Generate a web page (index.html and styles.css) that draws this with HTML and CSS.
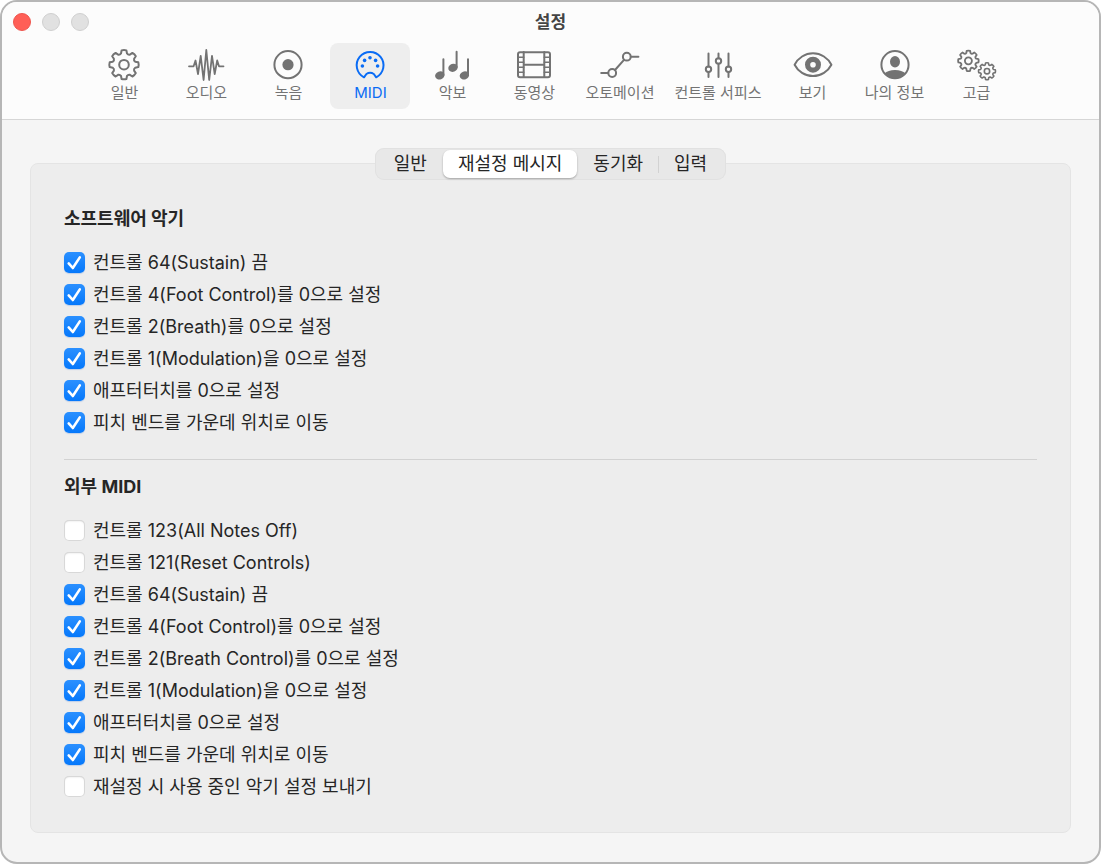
FILE: index.html
```html
<!DOCTYPE html>
<html lang="ko">
<head>
  <meta charset="UTF-8">
  <meta name="viewport" content="width=device-width, initial-scale=1.0">
  <title>설정</title>
  <link rel="stylesheet" href="styles.css">
</head>
<body>
  <div class="window">
    <header class="header">
      <div class="titlebar">
        <div class="lights">
          <button class="light close" aria-label="닫기"></button>
          <button class="light" aria-label="최소화" disabled></button>
          <button class="light" aria-label="확대" disabled></button>
        </div>
        <h1>설정</h1>
      </div>

      <nav class="toolbar">
        <button class="tool">
          <svg class="icon" viewBox="0 0 40 34">
            <defs>
              <path id="gear" d="M-2.4-14.3Q0-15 2.4-14.3L3-11.2Q4.2-9.6 5.9-10.1L8.4-11.8Q10.6-10.6 11.8-8.4L10.1-5.9Q9.6-4.2 11.2-3L14.3-2.4Q15 0 14.3 2.4L11.2 3Q9.6 4.2 10.1 5.9L11.8 8.4Q10.6 10.6 8.4 11.8L5.9 10.1Q4.2 9.6 3 11.2L2.4 14.3Q0 15-2.4 14.3L-3 11.2Q-4.2 9.6-5.9 10.1L-8.4 11.8Q-10.6 10.6-11.8 8.4L-10.1 5.9Q-9.6 4.2-11.2 3L-14.3 2.4Q-15 0-14.3-2.4L-11.2-3Q-9.6-4.2-10.1-5.9L-11.8-8.4Q-10.6-10.6-8.4-11.8L-5.9-10.1Q-4.2-9.6-3-11.2Z"/>
            </defs>
            <g transform="translate(20 17.7)"><use href="#gear"/><circle r="4.8"/></g>
          </svg>
          <span>일반</span>
        </button>
        <button class="tool">
          <svg class="icon" viewBox="0 0 40 34">
            <path stroke-width="1.8" d="M3 19.3H7.6L9.5 13.5L12 27L14.7 8.8L17.6 33L20.3 3L23.2 33L26 8.8L28.7 27L31.2 13.5L33 19.3H37.5"/>
          </svg>
          <span>오디오</span>
        </button>
        <button class="tool">
          <svg class="icon" viewBox="0 0 40 34">
            <circle cx="20" cy="17.7" r="13.6"/><circle class="fill" cx="20" cy="17.7" r="5.6"/>
          </svg>
          <span>녹음</span>
        </button>
        <button class="tool active" aria-current="page">
          <svg class="icon" viewBox="0 0 40 34">
            <path d="M14 30.3A13.4 13.4 0 1 1 26.2 30.3L23.8 27Q20.1 24.6 16.4 27Z"/>
            <g class="fill">
              <circle cx="12.4" cy="19" r="1.8"/><circle cx="14.6" cy="13.4" r="1.8"/><circle cx="20" cy="10.8" r="1.8"/><circle cx="25.6" cy="13.4" r="1.8"/><circle cx="27.6" cy="19" r="1.8"/>
            </g>
          </svg>
          <span>MIDI</span>
        </button>
        <button class="tool">
          <svg class="icon" viewBox="0 0 40 34">
            <path d="M11.4 28V12.2M24.6 20V4.8M36 28V12.2"/>
            <g class="fill">
              <ellipse cx="7.8" cy="28.4" rx="4.8" ry="4" transform="rotate(-20 7.8 28.4)"/>
              <ellipse cx="21" cy="20.8" rx="4.8" ry="4" transform="rotate(-20 21 20.8)"/>
              <ellipse cx="32.4" cy="28.4" rx="4.8" ry="4" transform="rotate(-20 32.4 28.4)"/>
            </g>
          </svg>
          <span>악보</span>
        </button>
        <button class="tool">
          <svg class="icon" viewBox="0 0 40 34">
            <rect x="4" y="5.2" width="32" height="25" rx="2"/>
            <path d="M9.7 5V30M30.3 5V30M9.7 17.7H30.3"/>
            <path stroke-width="1.6" d="M4 10.2H9.7M4 15.2H9.7M4 20.2H9.7M4 25.2H9.7M30.3 10.2H36M30.3 15.2H36M30.3 20.2H36M30.3 25.2H36"/>
          </svg>
          <span>동영상</span>
        </button>
        <button class="tool">
          <svg class="icon" viewBox="0 0 40 34">
            <path d="M1.2 26H8.2M15 23L24 12.8M30.8 9.7H38.4"/>
            <circle cx="12.2" cy="26" r="3.9"/><circle cx="26.8" cy="9.7" r="3.9"/>
          </svg>
          <span>오토메이션</span>
        </button>
        <button class="tool">
          <svg class="icon" viewBox="0 0 40 34">
            <path d="M10.5 6.6V19.6M10.5 25V30M20.5 6.6V11.3M20.5 16.7V30M30.5 6.6V19.6M30.5 25V30"/>
            <circle cx="10.5" cy="22.3" r="2.7"/><circle cx="20.5" cy="14" r="2.7"/><circle cx="30.5" cy="22.3" r="2.7"/>
          </svg>
          <span>컨트롤 서피스</span>
        </button>
        <button class="tool">
          <svg class="icon" viewBox="0 0 40 34">
            <path d="M1.6 17.7C5 11 12 6.3 20 6.3S35 11 38.4 17.7C35 24.4 28 29.1 20 29.1S5 24.4 1.6 17.7Z"/>
            <circle stroke-width="5.2" cx="20" cy="17.7" r="5.4"/>
          </svg>
          <span>보기</span>
        </button>
        <button class="tool">
          <svg class="icon" viewBox="0 0 40 34">
            <circle cx="20" cy="17.7" r="13.6"/>
            <ellipse class="fill" cx="20" cy="14.8" rx="5" ry="5.7"/>
            <path class="fill" d="M9.4 26.6Q13 23 20 23T30.6 26.6Q26.5 31.3 20 31.3T9.4 26.6Z"/>
          </svg>
          <span>나의 정보</span>
        </button>
        <button class="tool">
          <svg class="icon" viewBox="0 0 40 34">
            <g transform="translate(11.4 13.8) scale(.7)" stroke-width="2.6"><use href="#gear"/><circle r="5"/></g>
            <g transform="translate(30 24.2) scale(.58)" stroke-width="2.8"><use href="#gear"/><circle r="4.6"/></g>
          </svg>
          <span>고급</span>
        </button>
      </nav>
    </header>

    <main class="content">
      <div class="tabs" role="tablist">
        <button class="tab" role="tab">일반</button>
        <button class="tab selected" role="tab" aria-selected="true">재설정 메시지</button>
        <button class="tab" role="tab">동기화</button>
        <button class="tab divided" role="tab">입력</button>
      </div>

      <div class="panel">
        <section>
          <h2>소프트웨어 악기</h2>
          <label class="row"><input type="checkbox" checked>컨트롤 64(Sustain) 끔</label>
          <label class="row"><input type="checkbox" checked>컨트롤 4(Foot Control)를 0으로 설정</label>
          <label class="row"><input type="checkbox" checked>컨트롤 2(Breath)를 0으로 설정</label>
          <label class="row"><input type="checkbox" checked>컨트롤 1(Modulation)을 0으로 설정</label>
          <label class="row"><input type="checkbox" checked>애프터터치를 0으로 설정</label>
          <label class="row"><input type="checkbox" checked>피치 벤드를 가운데 위치로 이동</label>
        </section>
        <hr>
        <section>
          <h2>외부 MIDI</h2>
          <label class="row"><input type="checkbox">컨트롤 123(All Notes Off)</label>
          <label class="row"><input type="checkbox">컨트롤 121(Reset Controls)</label>
          <label class="row"><input type="checkbox" checked>컨트롤 64(Sustain) 끔</label>
          <label class="row"><input type="checkbox" checked>컨트롤 4(Foot Control)를 0으로 설정</label>
          <label class="row"><input type="checkbox" checked>컨트롤 2(Breath Control)를 0으로 설정</label>
          <label class="row"><input type="checkbox" checked>컨트롤 1(Modulation)을 0으로 설정</label>
          <label class="row"><input type="checkbox" checked>애프터터치를 0으로 설정</label>
          <label class="row"><input type="checkbox" checked>피치 벤드를 가운데 위치로 이동</label>
          <label class="row"><input type="checkbox">재설정 시 사용 중인 악기 설정 보내기</label>
        </section>
      </div>
    </main>
  </div>
</body>
</html>
```
FILE: styles.css
```css
* { box-sizing: border-box; }
body { margin: 0; background: #fff; color: #262626; font-family: Inter, "Noto Sans CJK KR", sans-serif; font-size: 18px; line-height: 24px; }
button { font: inherit; color: inherit; border: none; background: none; padding: 0; }

.window { display: flex; flex-direction: column; min-height: calc(100vh - 1px); border: 2px solid #b6b6b6; border-radius: 17px; background: #f5f5f5; overflow: hidden; }

/* title bar and toolbar */
.header { background: #fcfcfc; border-bottom: 1px solid #d6d6d6; padding-bottom: 10px; }
.titlebar { display: grid; grid-template-columns: 1fr auto 1fr; align-items: center; height: 41px; padding: 0 11px 2px; }
.titlebar h1 { grid-column: 2; margin: 0; font-size: 17px; font-weight: 700; color: #444; }
.lights { display: flex; gap: 11px; }
.light { width: 18px; height: 18px; border-radius: 50%; background: #e1e1e1; border: 1px solid #cfcfcf; }
.light.close { background: #ff5f57; border-color: #ee554e; }

.toolbar { display: flex; justify-content: center; gap: 2px; }
.tool { display: flex; flex-direction: column; align-items: center; min-width: 80px; height: 66px; padding: 4px 9px 0; border-radius: 8px; color: #737373; font-size: 15px; line-height: 24px; white-space: nowrap; }
.tool.active { background: #eeeeee; color: #0a6cf5; }
.icon { width: 40px; height: 34px; fill: none; stroke: currentColor; stroke-width: 2; stroke-linecap: round; stroke-linejoin: round; }
.icon .fill { fill: currentColor; stroke: none; }

/* tabs sit on the top edge of the panel */
.content { flex: 1; display: flex; flex-direction: column; padding: 28px 28px 29px; }
.tabs { position: relative; align-self: center; display: flex; gap: 1px; height: 32px; padding: 2px 4px; margin-bottom: -17px; border-radius: 9px; background: #e8e8e8; box-shadow: inset 0 0 0 1px #e1e1e1; }
.tab { position: relative; padding: 0 15px; border-radius: 7px; line-height: 26px; }
.tab.selected { background: #fff; box-shadow: 0 1px 2px rgba(0,0,0,0.3); }
.tab.divided::before { content: ""; position: absolute; left: -1px; top: 6px; width: 1px; height: 17px; background: #d2d2d2; }

.panel { flex: 1; padding: 43px 33px 28px; border: 1px solid #e4e4e4; border-radius: 8px; background: #ededed; }
.panel h2 { margin: 0 0 16px; font-size: 18px; line-height: 24px; font-weight: 700; }
.panel hr { height: 1px; margin: 20px 0 15px; border: none; background: #d2d2d2; }
.row { display: flex; align-items: center; gap: 8px; height: 32px; }
.row input { appearance: none; flex: none; width: 21px; height: 21px; margin: 0 0 2px; border-radius: 5px; background: #fff; box-shadow: inset 0 0 0 1px #d8d8d8, inset 0 1px 2px rgba(0,0,0,0.15); }
.row input:checked { background: url("data:image/svg+xml,%3Csvg xmlns='http://www.w3.org/2000/svg' viewBox='0 0 21 21' fill='none' stroke='white' stroke-width='2.6' stroke-linecap='round' stroke-linejoin='round'%3E%3Cpath d='M4.7 11.4L8.8 16L15.8 5.4'/%3E%3C/svg%3E"), linear-gradient(#2b90ff, #0578fb); box-shadow: 0 1px 1px rgba(0,90,220,0.2); }
```
